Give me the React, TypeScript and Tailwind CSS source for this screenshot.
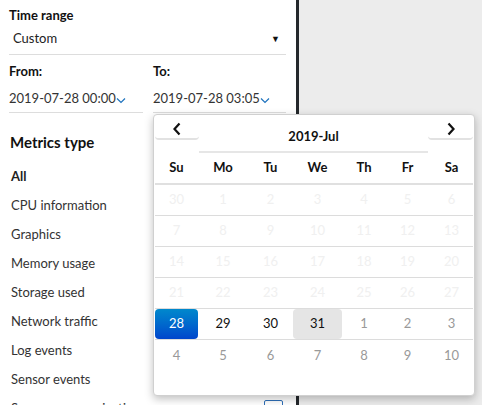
import React from "react";

const font = { fontFamily: "Lato, 'Open Sans', sans-serif" };

const metrics = [
  "CPU information",
  "Graphics",
  "Memory usage",
  "Storage used",
  "Network traffic",
  "Log events",
  "Sensor events",
  "Screen communication",
];

type Day = { n: number; kind: "off" | "cur" | "next" | "sel" | "today" };

const weeks: Day[][] = [
  [30, 1, 2, 3, 4, 5, 6].map((n) => ({ n, kind: "off" as const })),
  [7, 8, 9, 10, 11, 12, 13].map((n) => ({ n, kind: "off" as const })),
  [14, 15, 16, 17, 18, 19, 20].map((n) => ({ n, kind: "off" as const })),
  [21, 22, 23, 24, 25, 26, 27].map((n) => ({ n, kind: "off" as const })),
  [
    { n: 28, kind: "sel" },
    { n: 29, kind: "cur" },
    { n: 30, kind: "cur" },
    { n: 31, kind: "today" },
    { n: 1, kind: "next" },
    { n: 2, kind: "next" },
    { n: 3, kind: "next" },
  ],
  [4, 5, 6, 7, 8, 9, 10].map((n) => ({ n, kind: "next" as const })),
];

const cols = "grid grid-cols-[43px_50px_45px_49px_44px_43px_45px]";

function Chevron() {
  return (
    <svg width="10" height="7" viewBox="0 0 10 7" className="mt-[2px]">
      <path d="M1 1.5 L5 5.5 L9 1.5" fill="none" stroke="#1e73be" strokeWidth="1.2" />
    </svg>
  );
}

function DayCell({ d }: { d: Day }) {
  if (d.kind === "sel")
    return (
      <div className="flex h-[30px] items-center justify-center rounded-[4px] bg-gradient-to-b from-[#0088cc] to-[#0044cc] text-white">
        {d.n}
      </div>
    );
  const color =
    d.kind === "off" ? "text-[#f0f0f0]" : d.kind === "next" ? "text-[#999]" : "text-[#111]";
  return (
    <div
      className={`flex h-[30px] items-center justify-center rounded-[4px] ${color} ${
        d.kind === "today" ? "bg-[#e5e5e5]" : ""
      }`}
    >
      {d.n}
    </div>
  );
}

function Calendar() {
  return (
    <div className="absolute left-[153px] top-[114px] h-[282px] w-[322px] rounded-[4px] border border-[#d0d0d0] bg-white px-[1px] pt-[3px] shadow-[0_3px_8px_rgba(0,0,0,0.25)]">
      <div className="flex h-[35px]">
        <div className="flex h-[22px] w-[44px] items-start justify-center rounded-b-[4px] border-b-2 border-[#e2e2e2]">
          <svg width="10" height="14" viewBox="0 0 10 14" className="mt-[4px]">
            <path d="M7.5 1.5 L2.5 7 L7.5 12.5" fill="none" stroke="#111" strokeWidth="2.2" />
          </svg>
        </div>
        <div className="flex flex-1 items-end justify-center border-b-2 border-[#e6e6e6] pb-[5px] text-[13px] font-bold text-[#111]">
          2019-Jul
        </div>
        <div className="flex h-[22px] w-[45px] items-start justify-center rounded-b-[4px] border-b-2 border-[#e2e2e2]">
          <svg width="10" height="14" viewBox="0 0 10 14" className="mt-[4px]">
            <path d="M2.5 1.5 L7.5 7 L2.5 12.5" fill="none" stroke="#111" strokeWidth="2.2" />
          </svg>
        </div>
      </div>
      <div className={`${cols} h-[32px] items-center border-b-2 border-[#e0e0e0] text-[13px] font-bold text-[#111]`}>
        {["Su", "Mo", "Tu", "We", "Th", "Fr", "Sa"].map((d) => (
          <div key={d} className="text-center">
            {d}
          </div>
        ))}
      </div>
      {weeks.map((w, i) => (
        <div
          key={i}
          className={`${cols} h-[31px] items-center text-[13px] ${
            i < weeks.length - 1 ? "border-b border-[#dcdcdc]" : ""
          }`}
        >
          {w.map((d, j) => (
            <DayCell key={j} d={d} />
          ))}
        </div>
      ))}
    </div>
  );
}

export default function App() {
  return (
    <div className="relative flex h-[405px] w-[482px] overflow-hidden bg-[#ececec]" style={font}>
      <div className="w-[296px] shrink-0 bg-white pl-[9px] pr-[10px] pt-[6px] text-[13px] text-[#333]">
        <div className="text-[13px] font-bold text-[#111]">Time range</div>
        <div className="flex h-[29px] items-center justify-between border-b border-[#ddd] pl-[4px] pr-[6px] pb-[1px] text-[#222]">
          <span>Custom</span>
          <span className="text-[9px] text-[#111]">▼</span>
        </div>
        <div className="mt-[7px] flex gap-[10px]">
          <div className="w-[134px]">
            <div className="font-bold text-[#111]">From:</div>
            <div className="flex h-[32px] items-center border-b border-[#ddd] pt-[5px] text-[#333]">
              2019-07-28 00:00
              <Chevron />
            </div>
          </div>
          <div className="flex-1">
            <div className="font-bold text-[#111]">To:</div>
            <div className="flex h-[32px] items-center border-b border-[#ddd] pt-[5px] text-[#333]">
              2019-07-28 03:05
              <Chevron />
            </div>
          </div>
        </div>
        <div className="mt-[18px] pl-[1px] text-[15px] font-bold text-[#111]">Metrics type</div>
        <div className="mt-[13px] flex flex-col gap-[10px] pl-[2px] leading-[19px]">
          <div className="font-bold text-[#222]">All</div>
          {metrics.map((m, i) => (
            <div key={m} className="flex items-center justify-between pr-[3px]">
              <span>{m}</span>
              {i === metrics.length - 1 && (
                <span className="h-[16px] w-[19px] rounded-[2px] border border-[#2f6fb8]" />
              )}
            </div>
          ))}
        </div>
      </div>
      <div className="w-[3px] shrink-0 bg-[#24282c]" />
      <div className="flex-1" />
      <Calendar />
    </div>
  );
}
